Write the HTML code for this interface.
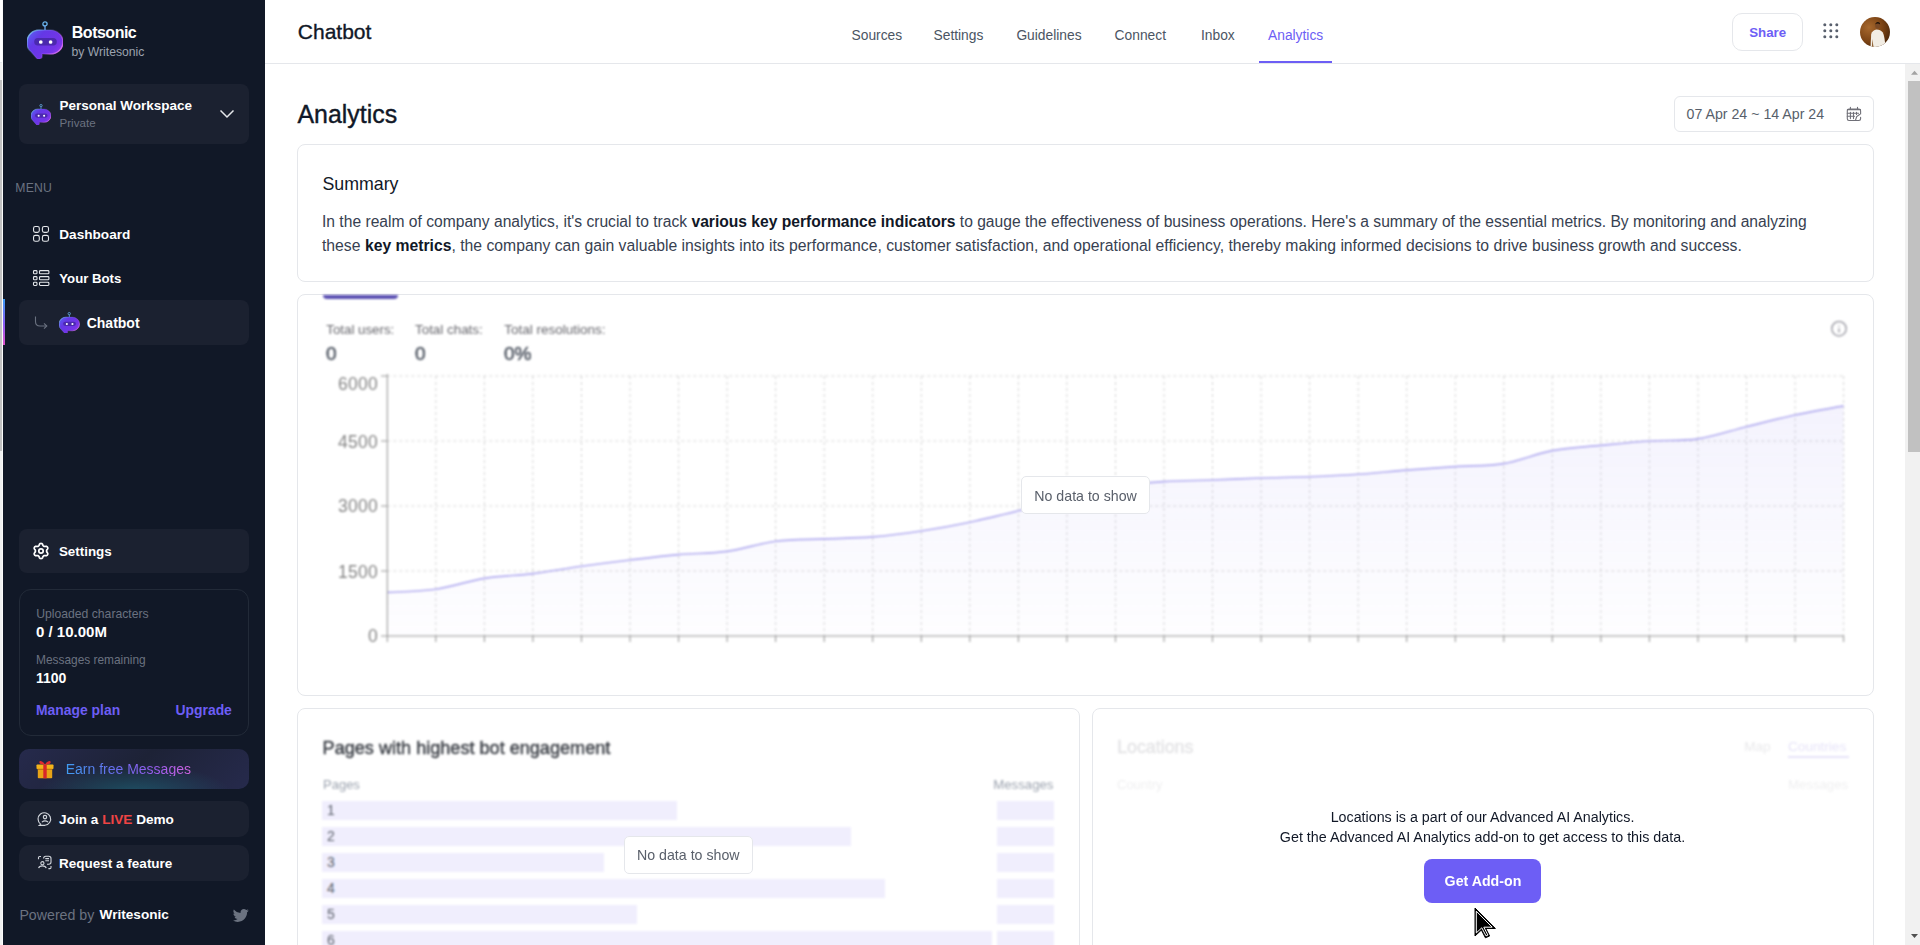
<!DOCTYPE html>
<html><head><meta charset="utf-8"><style>
html,body{margin:0;padding:0;width:1920px;height:945px;overflow:hidden;background:#fff;position:relative;font-family:"Liberation Sans", sans-serif}
.t{position:absolute;line-height:1;white-space:nowrap;font-family:"Liberation Sans", sans-serif}
b{font-weight:700}
</style></head><body>
<div style="position:absolute;left:0px;top:0px;width:2px;height:62px;background:#fff"></div>
<div style="position:absolute;left:0px;top:62px;width:2px;height:1px;background:#e5e7eb"></div>
<div style="position:absolute;left:0px;top:63px;width:2px;height:17px;background:#f1f1f1"></div>
<div style="position:absolute;left:0px;top:80px;width:2px;height:371px;background:#c1c1c1"></div>
<div style="position:absolute;left:0px;top:451px;width:2px;height:494px;background:#f1f1f1"></div>
<div style="position:absolute;left:2px;top:0px;width:1px;height:945px;background:#fafafa"></div>
<div style="position:absolute;left:3px;top:0px;width:262px;height:945px;background:#111827"></div>
<svg style="position:absolute;left:27px;top:20.5px" width="36" height="38.00" viewBox="0 0 36 38">
<defs><linearGradient id="ga" x1="0" y1="0.2" x2="1" y2="0.9"><stop offset="0" stop-color="#5b5cf0"/><stop offset="0.25" stop-color="#6438e6"/><stop offset="0.7" stop-color="#7434e8"/><stop offset="1" stop-color="#9a42ee"/></linearGradient><linearGradient id="ra" x1="0" y1="0" x2="1" y2="0.6"><stop offset="0" stop-color="#8cdcff" stop-opacity="1"/><stop offset="0.4" stop-color="#7aa8ff" stop-opacity="0.25"/><stop offset="0.7" stop-color="#d070ff" stop-opacity="0.2"/><stop offset="1" stop-color="#e878ff" stop-opacity="0.95"/></linearGradient></defs>
<circle cx="18" cy="2.9" r="2.1" fill="none" stroke="#6bb6f0" stroke-width="1.3"/>
<rect x="17.35" y="4.8" width="1.3" height="4.6" fill="#6aa8f0"/>
<path d="M12.5 9 H23.5 A12.5 12 0 0 1 36 21 A12.5 12 0 0 1 23.5 33 H15.2 V34.6 A3.3 3.3 0 0 1 9.6 37.2 L4.2 31 A12.5 12 0 0 1 0 21 A12.5 12 0 0 1 12.5 9 Z" fill="url(#ga)"/>
<path d="M12.5 9 H23.5 A12.5 12 0 0 1 36 21 A12.5 12 0 0 1 23.5 33 H15.2 V34.6 A3.3 3.3 0 0 1 9.6 37.2 L4.2 31 A12.5 12 0 0 1 0 21 A12.5 12 0 0 1 12.5 9 Z" fill="none" stroke="url(#ra)" stroke-width="1.4"/>
<rect x="7.2" y="17" width="22.6" height="7.6" rx="3.8" fill="#4427a0" opacity="0.8"/>
<circle cx="13.8" cy="21" r="1.85" fill="#fff"/><circle cx="23.6" cy="21" r="1.85" fill="#fff"/>
</svg>
<div class="t" style="left:71.80px;top:24.60px;font-size:16px;font-weight:700;color:#ffffff;letter-spacing:-0.5px">Botsonic</div>
<div class="t" style="left:71.50px;top:45.63px;font-size:12.2px;font-weight:400;color:#9ca3af;">by Writesonic</div>
<div style="position:absolute;left:19px;top:84px;width:230px;height:60px;background:#1b2130;border-radius:8px"></div>
<svg style="position:absolute;left:31px;top:103.5px" width="20" height="21.11" viewBox="0 0 36 38">
<defs><linearGradient id="gb" x1="0" y1="0.2" x2="1" y2="0.9"><stop offset="0" stop-color="#5b5cf0"/><stop offset="0.25" stop-color="#6438e6"/><stop offset="0.7" stop-color="#7434e8"/><stop offset="1" stop-color="#9a42ee"/></linearGradient><linearGradient id="rb" x1="0" y1="0" x2="1" y2="0.6"><stop offset="0" stop-color="#8cdcff" stop-opacity="1"/><stop offset="0.4" stop-color="#7aa8ff" stop-opacity="0.25"/><stop offset="0.7" stop-color="#d070ff" stop-opacity="0.2"/><stop offset="1" stop-color="#e878ff" stop-opacity="0.95"/></linearGradient></defs>
<circle cx="18" cy="2.9" r="2.1" fill="none" stroke="#6bb6f0" stroke-width="1.3"/>
<rect x="17.35" y="4.8" width="1.3" height="4.6" fill="#6aa8f0"/>
<path d="M12.5 9 H23.5 A12.5 12 0 0 1 36 21 A12.5 12 0 0 1 23.5 33 H15.2 V34.6 A3.3 3.3 0 0 1 9.6 37.2 L4.2 31 A12.5 12 0 0 1 0 21 A12.5 12 0 0 1 12.5 9 Z" fill="url(#gb)"/>
<path d="M12.5 9 H23.5 A12.5 12 0 0 1 36 21 A12.5 12 0 0 1 23.5 33 H15.2 V34.6 A3.3 3.3 0 0 1 9.6 37.2 L4.2 31 A12.5 12 0 0 1 0 21 A12.5 12 0 0 1 12.5 9 Z" fill="none" stroke="url(#rb)" stroke-width="1.4"/>
<rect x="7.2" y="17" width="22.6" height="7.6" rx="3.8" fill="#4427a0" opacity="0.8"/>
<circle cx="13.8" cy="21" r="1.85" fill="#fff"/><circle cx="23.6" cy="21" r="1.85" fill="#fff"/>
</svg>
<div class="t" style="left:59.50px;top:98.73px;font-size:13.5px;font-weight:700;color:#ffffff;">Personal Workspace</div>
<div class="t" style="left:59.50px;top:117.14px;font-size:11.6px;font-weight:400;color:#6b7280;">Private</div>
<svg style="position:absolute;left:219px;top:108px" width="16" height="12" viewBox="0 0 16 12"><path d="M1.5 2.5 L8 9 L14.5 2.5" fill="none" stroke="#e5e7eb" stroke-width="1.5"/></svg>
<div class="t" style="left:15.30px;top:181.53px;font-size:12.2px;font-weight:400;color:#6b7280;letter-spacing:0.2px">MENU</div>
<svg style="position:absolute;left:32px;top:225px" width="18" height="18" viewBox="0 0 18 18" fill="none" stroke="#e5e7eb" stroke-width="1.1">
<rect x="1.55" y="1.45" width="5.75" height="5.9" rx="1.8"/><rect x="10.4" y="1.45" width="6.1" height="5.9" rx="1.8"/>
<rect x="1.55" y="10.35" width="5.75" height="5.9" rx="1.8"/><rect x="10.4" y="10.35" width="6.1" height="5.9" rx="1.8"/></svg>
<div class="t" style="left:59.30px;top:227.54px;font-size:13.6px;font-weight:700;color:#ffffff;">Dashboard</div>
<svg style="position:absolute;left:32px;top:269px" width="18" height="18" viewBox="0 0 18 18" fill="none" stroke="#e5e7eb" stroke-width="1.1">
<rect x="1.5" y="1.6" width="3.5" height="3.2" rx="0.9"/><rect x="1.5" y="7.6" width="3.5" height="3.2" rx="0.9"/><rect x="1.5" y="13.3" width="3.5" height="3.2" rx="0.9"/>
<rect x="7.5" y="1.6" width="9.4" height="3.2" rx="0.9"/><rect x="7.5" y="7.6" width="9.4" height="3.2" rx="0.9"/><rect x="7.5" y="13.3" width="9.4" height="3.2" rx="0.9"/></svg>
<div class="t" style="left:59.30px;top:271.98px;font-size:13.2px;font-weight:700;color:#ffffff;">Your Bots</div>
<div style="position:absolute;left:19px;top:300px;width:230px;height:45px;background:#1b2130;border-radius:8px"></div>
<div style="position:absolute;left:3px;top:299px;width:2px;height:46px;background:linear-gradient(180deg,#3b9cf5,#8b5cf6 55%,#e052c8)"></div>
<svg style="position:absolute;left:33px;top:315px" width="16" height="16" viewBox="0 0 16 16" fill="none" stroke="#6b7280" stroke-width="1.1"><path d="M2.5 1.5 V6.5 Q2.5 11 7 11 H13.5"/><path d="M11 8.3 L13.8 11 L11 13.7"/></svg>
<svg style="position:absolute;left:59px;top:311.5px" width="20.5" height="21.64" viewBox="0 0 36 38">
<defs><linearGradient id="gc" x1="0" y1="0.2" x2="1" y2="0.9"><stop offset="0" stop-color="#5b5cf0"/><stop offset="0.25" stop-color="#6438e6"/><stop offset="0.7" stop-color="#7434e8"/><stop offset="1" stop-color="#9a42ee"/></linearGradient><linearGradient id="rc" x1="0" y1="0" x2="1" y2="0.6"><stop offset="0" stop-color="#8cdcff" stop-opacity="1"/><stop offset="0.4" stop-color="#7aa8ff" stop-opacity="0.25"/><stop offset="0.7" stop-color="#d070ff" stop-opacity="0.2"/><stop offset="1" stop-color="#e878ff" stop-opacity="0.95"/></linearGradient></defs>
<circle cx="18" cy="2.9" r="2.1" fill="none" stroke="#6bb6f0" stroke-width="1.3"/>
<rect x="17.35" y="4.8" width="1.3" height="4.6" fill="#6aa8f0"/>
<path d="M12.5 9 H23.5 A12.5 12 0 0 1 36 21 A12.5 12 0 0 1 23.5 33 H15.2 V34.6 A3.3 3.3 0 0 1 9.6 37.2 L4.2 31 A12.5 12 0 0 1 0 21 A12.5 12 0 0 1 12.5 9 Z" fill="url(#gc)"/>
<path d="M12.5 9 H23.5 A12.5 12 0 0 1 36 21 A12.5 12 0 0 1 23.5 33 H15.2 V34.6 A3.3 3.3 0 0 1 9.6 37.2 L4.2 31 A12.5 12 0 0 1 0 21 A12.5 12 0 0 1 12.5 9 Z" fill="none" stroke="url(#rc)" stroke-width="1.4"/>
<rect x="7.2" y="17" width="22.6" height="7.6" rx="3.8" fill="#4427a0" opacity="0.8"/>
<circle cx="13.8" cy="21" r="1.85" fill="#fff"/><circle cx="23.6" cy="21" r="1.85" fill="#fff"/>
</svg>
<div class="t" style="left:86.70px;top:316.30px;font-size:14px;font-weight:700;color:#ffffff;">Chatbot</div>
<div style="position:absolute;left:19px;top:529px;width:230px;height:44px;background:#1b2130;border-radius:8px"></div>
<svg style="position:absolute;left:32px;top:542px" width="18" height="18" viewBox="0 0 18 18" fill="none" stroke="#fff" stroke-width="1.7" stroke-linejoin="round"><path d="M14.55 9.00 L14.57 8.71 L14.64 8.41 L14.75 8.09 L14.92 7.74 L15.33 7.30 L15.70 6.82 L15.79 6.39 L15.79 5.98 L15.70 5.59 L15.54 5.23 L15.31 4.90 L15.01 4.63 L14.66 4.42 L14.23 4.29 L13.63 4.37 L13.05 4.50 L12.66 4.47 L12.33 4.41 L12.04 4.32 L11.78 4.19 L11.53 4.03 L11.31 3.82 L11.09 3.56 L10.87 3.24 L10.70 2.67 L10.46 2.11 L10.14 1.81 L9.78 1.61 L9.39 1.49 L9.00 1.45 L8.61 1.49 L8.22 1.61 L7.86 1.81 L7.54 2.11 L7.30 2.67 L7.13 3.24 L6.91 3.56 L6.69 3.82 L6.47 4.03 L6.23 4.19 L5.96 4.32 L5.67 4.41 L5.34 4.47 L4.95 4.50 L4.37 4.37 L3.77 4.29 L3.34 4.42 L2.99 4.63 L2.69 4.90 L2.46 5.23 L2.30 5.59 L2.21 5.98 L2.21 6.39 L2.30 6.82 L2.67 7.30 L3.08 7.74 L3.25 8.09 L3.36 8.41 L3.43 8.71 L3.45 9.00 L3.43 9.29 L3.36 9.59 L3.25 9.91 L3.08 10.26 L2.67 10.70 L2.30 11.18 L2.21 11.61 L2.21 12.02 L2.30 12.41 L2.46 12.77 L2.69 13.10 L2.99 13.37 L3.34 13.58 L3.77 13.71 L4.37 13.63 L4.95 13.50 L5.34 13.53 L5.67 13.59 L5.96 13.68 L6.22 13.81 L6.47 13.97 L6.69 14.18 L6.91 14.44 L7.13 14.76 L7.30 15.33 L7.54 15.89 L7.86 16.19 L8.22 16.39 L8.61 16.51 L9.00 16.55 L9.39 16.51 L9.78 16.39 L10.14 16.19 L10.46 15.89 L10.70 15.33 L10.87 14.76 L11.09 14.44 L11.31 14.18 L11.53 13.97 L11.78 13.81 L12.04 13.68 L12.33 13.59 L12.66 13.53 L13.05 13.50 L13.63 13.63 L14.23 13.71 L14.66 13.58 L15.01 13.37 L15.31 13.10 L15.54 12.77 L15.70 12.41 L15.79 12.02 L15.79 11.61 L15.70 11.18 L15.33 10.70 L14.92 10.26 L14.75 9.91 L14.64 9.59 L14.57 9.29 L14.55 9.00Z"/><circle cx="9" cy="9" r="2.2"/></svg>
<div class="t" style="left:58.90px;top:544.61px;font-size:13.4px;font-weight:700;color:#ffffff;">Settings</div>
<div style="position:absolute;left:19px;top:589px;width:230px;height:147px;border:1px solid #222a38;border-radius:12px;box-sizing:border-box"></div>
<div class="t" style="left:36.20px;top:607.63px;font-size:12.2px;font-weight:400;color:#6b7280;">Uploaded characters</div>
<div class="t" style="left:36.00px;top:624.35px;font-size:15px;font-weight:700;color:#ffffff;">0 / 10.00M</div>
<div class="t" style="left:36.00px;top:654.88px;font-size:11.9px;font-weight:400;color:#6b7280;">Messages remaining</div>
<div class="t" style="left:36.00px;top:670.90px;font-size:14px;font-weight:700;color:#ffffff;">1100</div>
<div class="t" style="left:36.00px;top:704.48px;font-size:13.9px;font-weight:700;color:#6d5ef5;">Manage plan</div>
<div class="t" style="left:175.50px;top:704.48px;font-size:13.9px;font-weight:700;color:#6d5ef5;">Upgrade</div>
<div style="position:absolute;left:19px;top:749px;width:230px;height:40px;border-radius:10px;background:radial-gradient(ellipse 42% 75% at 50% 112%,rgba(30,95,115,0.75),rgba(30,95,115,0) 100%),linear-gradient(135deg,#262a4c 0%,#1d2236 50%,#262a4c 100%)"></div>
<svg style="position:absolute;left:35px;top:759px" width="20" height="20" viewBox="0 0 20 20">
<rect x="1.5" y="5.5" width="17" height="4.5" rx="0.8" fill="#f4b41a"/>
<rect x="2.8" y="9.8" width="14.4" height="9.5" rx="0.8" fill="#e8a317"/>
<rect x="2.8" y="9.8" width="14.4" height="1.2" fill="#c07a10"/>
<rect x="8.3" y="5.5" width="3.4" height="13.8" fill="#d7262a"/>
<path d="M10 5.5 C7 1 3.5 1.5 4.5 4 C5 5 7.5 5.5 10 5.5 Z M10 5.5 C13 1 16.5 1.5 15.5 4 C15 5 12.5 5.5 10 5.5 Z" fill="#e02b2f"/>
</svg>
<div class="t" style="left:65.70px;top:762.00px;font-size:14px;font-weight:400;color:#8b5cf6;background:linear-gradient(90deg,#3f9df2 0%,#6b6cf0 40%,#9a5cf0 70%,#d064e0 100%);-webkit-background-clip:text;background-clip:text;color:transparent">Earn free Messages</div>
<div style="position:absolute;left:19px;top:801px;width:230px;height:36px;background:#1b2130;border-radius:10px"></div>
<svg style="position:absolute;left:36.8px;top:810.7px" width="16" height="16" viewBox="0 0 16 16" fill="none" stroke="#d1d5db" stroke-width="1.15">
<path d="M3.6 13.1 A6.3 6.3 0 1 1 8 14.3 H2.3 Z" /><circle cx="8" cy="6.1" r="1.7"/><path d="M4.9 11.1 Q8 8.6 11.1 11.1"/></svg>
<div class="t" style="left:59.10px;top:812.74px;font-size:13.6px;font-weight:700;color:#ffffff;">Join a <span style="color:#ef4444">LIVE</span> Demo</div>
<div style="position:absolute;left:19px;top:845px;width:230px;height:36px;background:#1b2130;border-radius:10px"></div>
<svg style="position:absolute;left:36px;top:854px" width="16" height="16" viewBox="0 0 16 16" fill="none" stroke="#d1d5db" stroke-width="1.1">
<path d="M2.5 5.2 V3.6 Q2.5 2.5 3.6 2.5 H5"/><path d="M15 12 V13.5 Q15 14.6 13.9 14.6 H12.4"/>
<path d="M7.6 4.4 Q7.6 2.2 9.8 2.2 H12.8 Q15 2.2 15 4.4 V8 Q15 10.2 12.8 10.2 H11"/><path d="M9.3 4.6 H13 M9.3 6.7 H13"/>
<circle cx="6.4" cy="9.2" r="1.6"/><path d="M2.6 14.2 Q3.2 11.9 6.4 11.9 Q9.6 11.9 10.2 14.2"/></svg>
<div class="t" style="left:59.10px;top:856.52px;font-size:13.5px;font-weight:700;color:#ffffff;">Request a feature</div>
<div class="t" style="left:19.40px;top:907.63px;font-size:14.2px;font-weight:400;color:#6b7280;">Powered by</div>
<div class="t" style="left:99.60px;top:908.14px;font-size:13.6px;font-weight:700;color:#ffffff;">Writesonic</div>
<svg style="position:absolute;left:233px;top:907.8px" width="16" height="15" viewBox="0 0 24 20"><path fill="#6b7280" d="M23.6 2.4c-.9.4-1.8.6-2.8.8 1-.6 1.8-1.5 2.1-2.7-.9.6-2 1-3.1 1.2C18.9.7 17.6.1 16.2.1c-2.7 0-4.9 2.2-4.9 4.9 0 .4 0 .8.1 1.1C7.3 5.9 3.7 4 1.3 1 .9 1.7.6 2.6.6 3.5c0 1.7.9 3.2 2.2 4.1-.8 0-1.6-.2-2.2-.6v.1c0 2.4 1.7 4.4 3.9 4.8-.4.1-.8.2-1.3.2-.3 0-.6 0-.9-.1.6 2 2.4 3.4 4.6 3.4-1.7 1.3-3.8 2.1-6.1 2.1-.4 0-.8 0-1.2-.1 2.2 1.4 4.8 2.2 7.5 2.2 9.1 0 14-7.5 14-14v-.6c1-.7 1.8-1.6 2.5-2.6z"/></svg>
<div style="position:absolute;left:265px;top:63px;width:1655px;height:1px;background:#e5e7eb"></div>
<div class="t" style="left:297.80px;top:21.15px;font-size:21px;font-weight:400;color:#111827;-webkit-text-stroke:0.35px #111827">Chatbot</div>
<div class="t" style="left:851.50px;top:29.27px;font-size:13.8px;font-weight:400;color:#4b5563;">Sources</div>
<div class="t" style="left:933.50px;top:29.27px;font-size:13.8px;font-weight:400;color:#4b5563;">Settings</div>
<div class="t" style="left:1016.40px;top:29.27px;font-size:13.8px;font-weight:400;color:#4b5563;">Guidelines</div>
<div class="t" style="left:1114.60px;top:29.27px;font-size:13.8px;font-weight:400;color:#4b5563;">Connect</div>
<div class="t" style="left:1201.00px;top:29.27px;font-size:13.8px;font-weight:400;color:#4b5563;">Inbox</div>
<div class="t" style="left:1268.00px;top:29.27px;font-size:13.8px;font-weight:400;color:#6d5ef5;">Analytics</div>
<div style="position:absolute;left:1259px;top:61px;width:73px;height:2px;background:#6d5ef5"></div>
<div style="position:absolute;left:1732px;top:13px;width:71px;height:38px;border:1px solid #e5e7eb;border-radius:10px;box-sizing:border-box"></div>
<div class="t" style="left:1749.20px;top:25.59px;font-size:13.3px;font-weight:700;color:#6d5ef5;">Share</div>
<svg style="position:absolute;left:1823px;top:23px" width="16" height="16" viewBox="0 0 16 16" fill="#59606d"><circle cx="1.8" cy="1.8" r="1.5"/><circle cx="1.8" cy="7.8" r="1.5"/><circle cx="1.8" cy="13.8" r="1.5"/><circle cx="7.8" cy="1.8" r="1.5"/><circle cx="7.8" cy="7.8" r="1.5"/><circle cx="7.8" cy="13.8" r="1.5"/><circle cx="13.8" cy="1.8" r="1.5"/><circle cx="13.8" cy="7.8" r="1.5"/><circle cx="13.8" cy="13.8" r="1.5"/></svg>
<svg style="position:absolute;left:1860px;top:17px" width="30" height="30" viewBox="0 0 30 30">
<defs><radialGradient id="av" cx="0.3" cy="0.35" r="0.85"><stop offset="0" stop-color="#a8692e"/><stop offset="0.55" stop-color="#7b4314"/><stop offset="1" stop-color="#3e1f07"/></radialGradient>
<clipPath id="avc"><circle cx="15" cy="15" r="15"/></clipPath></defs>
<g clip-path="url(#avc)"><rect width="30" height="30" fill="url(#av)"/>
<path d="M10.5 30 L11.2 17 Q12.5 13.2 16.5 12.6 Q20.5 12.6 22.8 15.5 Q24.6 19 25.5 30 Z" fill="#f2ede4"/>
<path d="M12 30 L12.3 22 L13.5 30Z" fill="#8a5a2a"/>
<ellipse cx="17.6" cy="8.8" rx="2.4" ry="3" fill="#7a4a26"/><path d="M15.1 7.6 Q15.6 4.8 17.8 4.9 Q20.2 5 20.1 7.6 Q19 6.4 17.6 6.5 Q16 6.5 15.1 7.6Z" fill="#1a0f08"/></g></svg>
<div class="t" style="left:297.50px;top:102.44px;font-size:24.9px;font-weight:400;color:#111827;-webkit-text-stroke:0.4px #111827">Analytics</div>
<div style="position:absolute;left:1674px;top:96px;width:200px;height:36px;border:1px solid #e5e7eb;border-radius:6px;box-sizing:border-box"></div>
<div class="t" style="left:1686.50px;top:106.53px;font-size:14.2px;font-weight:400;color:#585f6b;">07 Apr 24 ~ 14 Apr 24</div>
<svg style="position:absolute;left:1846px;top:106px" width="16" height="16" viewBox="0 0 16 16" fill="none" stroke="#707078" stroke-width="1.1" stroke-linecap="round">
<path d="M14.6 11.2 V12.8 Q14.6 14.5 12.9 14.5 H3 Q1.3 14.5 1.3 12.8 V4.7 Q1.3 3 3 3 H12.9 Q14.6 3 14.6 4.7 V8"/><path d="M1.6 3.6 H14.3" stroke-width="1.4"/>
<path d="M4.4 1.2 V3 M11.5 1.2 V3 M4.4 6.3 V12.6 M7.5 6.3 V12.6 M10.5 6.3 V8.4 M1.3 7.3 H12.6 M1.3 10.3 H8.6 M13.6 8.5 L10.7 10.6 L9.4 14.5"/></svg>
<div style="position:absolute;left:297px;top:144px;width:1577px;height:138px;border:1px solid #e5e7eb;border-radius:8px;box-sizing:border-box"></div>
<div class="t" style="left:322.40px;top:175.77px;font-size:17.8px;font-weight:400;color:#111827;">Summary</div>
<div class="t" style="left:322.00px;top:213.71px;font-size:15.64px;font-weight:400;color:#374151;">In the realm of company analytics, it's crucial to track <b style="color:#111827">various key performance indicators</b> to gauge the effectiveness of business operations. Here's a summary of the essential metrics. By monitoring and analyzing</div>
<div class="t" style="left:322.00px;top:238.02px;font-size:15.74px;font-weight:400;color:#374151;">these <b style="color:#111827">key metrics</b>, the company can gain valuable insights into its performance, customer satisfaction, and operational efficiency, thereby making informed decisions to drive business growth and success.</div>
<div style="position:absolute;left:297px;top:294px;width:1577px;height:402px;border:1px solid #e5e7eb;border-radius:8px;box-sizing:border-box"></div>
<div style="position:absolute;left:0;top:0;width:1920px;height:945px;filter:blur(0.9px)">
<div style="position:absolute;left:323px;top:294.5px;width:75px;height:4.5px;background:#5a4fb2;border-radius:0 0 4px 4px"></div>
<div class="t" style="left:326.30px;top:322.89px;font-size:13.3px;font-weight:400;color:#66666c;">Total users:</div>
<div class="t" style="left:415.00px;top:322.81px;font-size:13.4px;font-weight:400;color:#66666c;">Total chats:</div>
<div class="t" style="left:504.20px;top:322.72px;font-size:13.5px;font-weight:400;color:#66666c;">Total resolutions:</div>
<div class="t" style="left:326.00px;top:343.85px;font-size:19px;font-weight:400;color:#545b66;-webkit-text-stroke:0.6px #545b66">0</div>
<div class="t" style="left:415.00px;top:343.85px;font-size:19px;font-weight:400;color:#545b66;-webkit-text-stroke:0.6px #545b66">0</div>
<div class="t" style="left:504.00px;top:343.85px;font-size:19px;font-weight:400;color:#545b66;-webkit-text-stroke:0.6px #545b66">0%</div>
<svg style="position:absolute;left:297px;top:294px" width="1577" height="402" viewBox="297 294 1577 402"><defs><linearGradient id="fillg" x1="0" y1="0" x2="0" y2="1"><stop offset="0" stop-color="#8b80f0" stop-opacity="0.095"/><stop offset="1" stop-color="#8b80f0" stop-opacity="0.01"/></linearGradient></defs><path d="M387.3 376 H1843.6 M387.3 441 H1843.6 M387.3 506 H1843.6 M387.3 571 H1843.6 M435.8 376 V636 M484.4 376 V636 M532.9 376 V636 M581.5 376 V636 M630.0 376 V636 M678.6 376 V636 M727.1 376 V636 M775.6 376 V636 M824.2 376 V636 M872.7 376 V636 M921.3 376 V636 M969.8 376 V636 M1018.4 376 V636 M1066.9 376 V636 M1115.5 376 V636 M1164.0 376 V636 M1212.5 376 V636 M1261.1 376 V636 M1309.6 376 V636 M1358.2 376 V636 M1406.7 376 V636 M1455.3 376 V636 M1503.8 376 V636 M1552.3 376 V636 M1600.9 376 V636 M1649.4 376 V636 M1698.0 376 V636 M1746.5 376 V636 M1795.1 376 V636 M1843.6 376 V636" stroke="#d6d6d6" stroke-width="1" stroke-dasharray="3 3" fill="none"/><path d="M387.30 592.40 C395.39 591.87 419.66 591.53 435.84 589.20 C452.02 586.87 468.21 581.00 484.39 578.40 C500.57 575.80 516.75 575.62 532.93 573.60 C549.11 571.58 565.29 568.57 581.47 566.30 C597.65 564.03 613.84 561.95 630.02 560.00 C646.20 558.05 662.38 556.03 678.56 554.60 C694.74 553.17 710.92 553.62 727.10 551.40 C743.28 549.17 759.47 543.33 775.65 541.25 C791.83 539.17 808.01 539.62 824.19 538.90 C840.37 538.17 856.55 538.22 872.73 536.90 C888.91 535.58 905.10 533.45 921.28 531.00 C937.46 528.55 953.64 525.57 969.82 522.20 C986.00 518.83 1002.18 514.83 1018.36 510.80 C1034.54 506.77 1050.73 501.97 1066.91 498.00 C1083.09 494.03 1099.27 489.73 1115.45 487.00 C1131.63 484.27 1147.81 482.77 1163.99 481.60 C1180.17 480.43 1196.36 480.60 1212.54 480.00 C1228.72 479.40 1244.90 478.53 1261.08 478.00 C1277.26 477.47 1293.44 477.42 1309.62 476.80 C1325.80 476.18 1341.99 475.42 1358.17 474.30 C1374.35 473.18 1390.53 471.38 1406.71 470.10 C1422.89 468.82 1439.07 467.68 1455.25 466.60 C1471.43 465.52 1487.62 466.27 1503.80 463.60 C1519.98 460.93 1536.16 453.63 1552.34 450.60 C1568.52 447.57 1584.70 447.00 1600.88 445.40 C1617.06 443.80 1633.25 442.08 1649.43 441.00 C1665.61 439.92 1681.79 441.28 1697.97 438.90 C1714.15 436.52 1730.33 430.68 1746.51 426.70 C1762.69 422.72 1778.88 418.47 1795.06 415.00 C1811.24 411.53 1835.51 407.42 1843.60 405.90 L1843.60 636 L387.30 636 Z" fill="url(#fillg)"/><path d="M387.30 592.40 C395.39 591.87 419.66 591.53 435.84 589.20 C452.02 586.87 468.21 581.00 484.39 578.40 C500.57 575.80 516.75 575.62 532.93 573.60 C549.11 571.58 565.29 568.57 581.47 566.30 C597.65 564.03 613.84 561.95 630.02 560.00 C646.20 558.05 662.38 556.03 678.56 554.60 C694.74 553.17 710.92 553.62 727.10 551.40 C743.28 549.17 759.47 543.33 775.65 541.25 C791.83 539.17 808.01 539.62 824.19 538.90 C840.37 538.17 856.55 538.22 872.73 536.90 C888.91 535.58 905.10 533.45 921.28 531.00 C937.46 528.55 953.64 525.57 969.82 522.20 C986.00 518.83 1002.18 514.83 1018.36 510.80 C1034.54 506.77 1050.73 501.97 1066.91 498.00 C1083.09 494.03 1099.27 489.73 1115.45 487.00 C1131.63 484.27 1147.81 482.77 1163.99 481.60 C1180.17 480.43 1196.36 480.60 1212.54 480.00 C1228.72 479.40 1244.90 478.53 1261.08 478.00 C1277.26 477.47 1293.44 477.42 1309.62 476.80 C1325.80 476.18 1341.99 475.42 1358.17 474.30 C1374.35 473.18 1390.53 471.38 1406.71 470.10 C1422.89 468.82 1439.07 467.68 1455.25 466.60 C1471.43 465.52 1487.62 466.27 1503.80 463.60 C1519.98 460.93 1536.16 453.63 1552.34 450.60 C1568.52 447.57 1584.70 447.00 1600.88 445.40 C1617.06 443.80 1633.25 442.08 1649.43 441.00 C1665.61 439.92 1681.79 441.28 1697.97 438.90 C1714.15 436.52 1730.33 430.68 1746.51 426.70 C1762.69 422.72 1778.88 418.47 1795.06 415.00 C1811.24 411.53 1835.51 407.42 1843.60 405.90" stroke="#b3adf0" stroke-width="1.65" fill="none"/><path d="M387.3 374 V636 M381 636 H1844.1 M381 376 H387.3 M381 441 H387.3 M381 506 H387.3 M381 571 H387.3 M381 636 H387.3 M387.3 636 V642 M435.8 636 V642 M484.4 636 V642 M532.9 636 V642 M581.5 636 V642 M630.0 636 V642 M678.6 636 V642 M727.1 636 V642 M775.6 636 V642 M824.2 636 V642 M872.7 636 V642 M921.3 636 V642 M969.8 636 V642 M1018.4 636 V642 M1066.9 636 V642 M1115.5 636 V642 M1164.0 636 V642 M1212.5 636 V642 M1261.1 636 V642 M1309.6 636 V642 M1358.2 636 V642 M1406.7 636 V642 M1455.3 636 V642 M1503.8 636 V642 M1552.3 636 V642 M1600.9 636 V642 M1649.4 636 V642 M1698.0 636 V642 M1746.5 636 V642 M1795.1 636 V642 M1843.6 636 V642" stroke="#959595" stroke-width="1.05" fill="none"/><circle cx="1839" cy="328.7" r="7.2" fill="none" stroke="#a3a3ab" stroke-width="1.5"/><path d="M1839 325.5 V326.5 M1839 328.3 V332.5" stroke="#a3a3ab" stroke-width="1.5"/></svg>
<div class="t" style="right:1542.2px;top:376.16px;font-size:17.5px;color:#858585;letter-spacing:0.2px">6000</div>
<div class="t" style="right:1542.2px;top:433.96px;font-size:17.5px;color:#858585;letter-spacing:0.2px">4500</div>
<div class="t" style="right:1542.2px;top:498.46px;font-size:17.5px;color:#858585;letter-spacing:0.2px">3000</div>
<div class="t" style="right:1542.2px;top:563.86px;font-size:17.5px;color:#858585;letter-spacing:0.2px">1500</div>
<div class="t" style="right:1542.2px;top:628.46px;font-size:17.5px;color:#858585;letter-spacing:0.2px">0</div>
<div class="t" style="left:322.60px;top:739.12px;font-size:18.1px;font-weight:400;color:#3b3f46;-webkit-text-stroke:0.45px #3b3f46">Pages with highest bot engagement</div>
<div class="t" style="left:323.00px;top:777.95px;font-size:13px;font-weight:400;color:#9ca3af;">Pages</div>
<div class="t" style="left:993.30px;top:777.78px;font-size:13.2px;font-weight:400;color:#9ca3af;">Messages</div>
<div style="position:absolute;left:322px;top:800.6px;width:354.70000000000005px;height:19.5px;background:#f0eefd"></div>
<div style="position:absolute;left:997px;top:800.6px;width:57px;height:19.5px;background:#f0eefd"></div>
<div class="t" style="left:327.00px;top:803.30px;font-size:14px;font-weight:400;color:#595f69;">1</div>
<div style="position:absolute;left:322px;top:826.6px;width:529.25px;height:19.5px;background:#f0eefd"></div>
<div style="position:absolute;left:997px;top:826.6px;width:57px;height:19.5px;background:#f0eefd"></div>
<div class="t" style="left:327.00px;top:829.30px;font-size:14px;font-weight:400;color:#595f69;">2</div>
<div style="position:absolute;left:322px;top:852.6px;width:281.6px;height:19.5px;background:#f0eefd"></div>
<div style="position:absolute;left:997px;top:852.6px;width:57px;height:19.5px;background:#f0eefd"></div>
<div class="t" style="left:327.00px;top:855.30px;font-size:14px;font-weight:400;color:#595f69;">3</div>
<div style="position:absolute;left:322px;top:878.6px;width:563px;height:19.5px;background:#f0eefd"></div>
<div style="position:absolute;left:997px;top:878.6px;width:57px;height:19.5px;background:#f0eefd"></div>
<div class="t" style="left:327.00px;top:881.30px;font-size:14px;font-weight:400;color:#595f69;">4</div>
<div style="position:absolute;left:322px;top:904.6px;width:314.9px;height:19.5px;background:#f0eefd"></div>
<div style="position:absolute;left:997px;top:904.6px;width:57px;height:19.5px;background:#f0eefd"></div>
<div class="t" style="left:327.00px;top:907.30px;font-size:14px;font-weight:400;color:#595f69;">5</div>
<div style="position:absolute;left:322px;top:930.6px;width:670px;height:19.5px;background:#f0eefd"></div>
<div style="position:absolute;left:997px;top:930.6px;width:57px;height:19.5px;background:#f0eefd"></div>
<div class="t" style="left:327.00px;top:933.30px;font-size:14px;font-weight:400;color:#595f69;">6</div>
</div>
<div style="position:absolute;left:0;top:0;width:1920px;height:945px;filter:blur(1.1px)">
<div class="t" style="left:1117.20px;top:739.07px;font-size:17.8px;font-weight:400;color:#e4e4e6;-webkit-text-stroke:0.4px #e4e4e6">Locations</div>
<div class="t" style="left:1744.20px;top:740.24px;font-size:13.6px;font-weight:400;color:#e9e9eb;">Map</div>
<div class="t" style="left:1788.00px;top:740.24px;font-size:13.6px;font-weight:400;color:#e6e3f8;">Countries</div>
<div style="position:absolute;left:1788px;top:756px;width:61px;height:2px;background:#e6e3f8"></div>
<div class="t" style="left:1117.00px;top:778.45px;font-size:13px;font-weight:400;color:#efeff0;">Country</div>
<div class="t" style="left:1788.00px;top:777.53px;font-size:13.2px;font-weight:400;color:#efeff0;">Messages</div>
</div>
<div style="position:absolute;left:297px;top:708px;width:783px;height:252px;border:1px solid #e5e7eb;border-radius:8px;box-sizing:border-box"></div>
<div style="position:absolute;left:1092px;top:708px;width:782px;height:252px;border:1px solid #e5e7eb;border-radius:8px;box-sizing:border-box"></div>
<div style="position:absolute;left:1021px;top:476px;width:129px;height:38px;background:#fff;border:1px solid #e5e7eb;border-radius:5px;box-sizing:border-box"></div>
<div class="t" style="left:1034.30px;top:488.53px;font-size:14.2px;font-weight:400;color:#5a606b;">No data to show</div>
<div style="position:absolute;left:624px;top:836px;width:129px;height:38px;background:#fff;border:1px solid #e5e7eb;border-radius:5px;box-sizing:border-box"></div>
<div class="t" style="left:637.00px;top:848.13px;font-size:14.2px;font-weight:400;color:#5a606b;">No data to show</div>
<div class="t" style="left:1182.5px;width:600px;text-align:center;top:810.17px;font-size:14.27px;color:#111827">Locations is a part of our Advanced AI Analytics.</div>
<div class="t" style="left:1182.5px;width:600px;text-align:center;top:830.35px;font-size:14.3px;color:#111827">Get the Advanced AI Analytics add-on to get access to this data.</div>
<div style="position:absolute;left:1424px;top:859px;width:117px;height:44px;background:#6d5ef5;border-radius:8px"></div>
<div class="t" style="left:1444.60px;top:873.53px;font-size:14.2px;font-weight:700;color:#ffffff;">Get Add-on</div>
<div style="position:absolute;left:1905px;top:64px;width:15px;height:881px;background:#f1f1f1"></div>
<div style="position:absolute;left:1908px;top:81px;width:12px;height:371px;background:#c1c1c1"></div>
<svg style="position:absolute;left:1905px;top:64px" width="15" height="15" viewBox="0 0 15 15"><path d="M6 10.8 L9.5 6.8 L13 10.8 Z" fill="#a3a3a3"/></svg>
<svg style="position:absolute;left:1905px;top:928px" width="15" height="15" viewBox="0 0 15 15"><path d="M6 6 L9.5 10 L13 6 Z" fill="#505050"/></svg>
<svg style="position:absolute;left:1474px;top:907px" width="28" height="34" viewBox="0 0 28 34"><path d="M1 1 L1 29 L7.4 23 L11.4 30.8 L15.6 29 L11.8 21.5 L21.4 21.5 Z" fill="#000" stroke="#000" stroke-width="1" stroke-linejoin="miter"/><path d="M2.3 4.2 L2.3 25.9 L7.8 20.8 L12 28.9 L13.9 28.1 L9.8 20.2 L18.2 20.2 Z" fill="none" stroke="#fff" stroke-width="1"/></svg>
</body></html>
